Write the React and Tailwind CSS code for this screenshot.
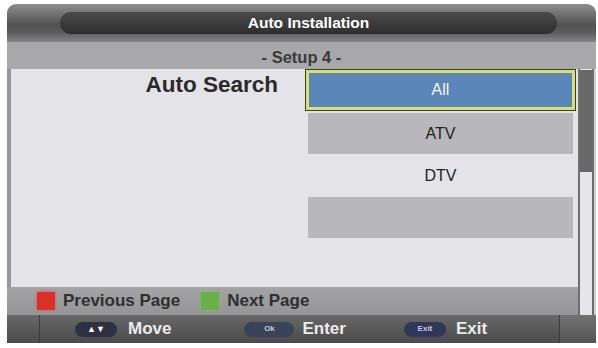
import React from "react"

const font = { fontFamily: '"Liberation Sans", Arial, sans-serif' }

function Pill({ children, color, width }) {
  return (
    <div
      className={`h-[15px] rounded-full flex items-center justify-center text-[8px] font-bold text-[#c9ccd6] leading-none ${color} ${width}`}
    >
      {children}
    </div>
  )
}

function ListItem({ label, tone }) {
  if (tone === "gray") {
    return (
      <div className="mx-[3px] h-[41px] bg-[#b8b7bb] flex items-center justify-center text-[16px] text-[#222]">
        {label}
      </div>
    )
  }
  return (
    <div className="mx-[3px] h-[43px] flex items-center justify-center text-[16px] text-[#222]">
      {label}
    </div>
  )
}

export default function App() {
  return (
    <div className="w-[598px] h-[348px] bg-white pt-[4px] pl-[7px] overflow-hidden" style={font}>
      <div className="w-[589px] flex flex-col">
        {/* title bar */}
        <div className="h-[38px] rounded-t-[9px] bg-[linear-gradient(to_bottom,#8e8e8e,#525252_55%,#5c5c5c_75%,#848486)] pt-[8px] pl-[53px] pr-[39px]">
          <div className="h-[22px] rounded-full bg-[linear-gradient(to_bottom,#4a4a4a,#2e2e2e)] flex items-center justify-center text-white text-[15.5px] font-bold">
            Auto Installation
          </div>
        </div>

        {/* setup step */}
        <div className="h-[27px] bg-[#a8a8aa] flex items-center justify-center pt-[3px] text-[16.5px] font-bold text-[#3a3a3a]">
          - Setup 4 -
        </div>

        {/* middle */}
        <div className="flex h-[246px]">
          <div className="w-[571px] flex flex-col">
            <div className="h-[218px] flex bg-[#e4e3e8] border-l-[4px] border-[#97979a]">
              <div className="w-[294px] pt-[3px] pr-[27px] text-right text-[22.5px] leading-[26px] font-bold text-[#2a2a2a]">
                Auto Search
              </div>
              <div className="w-[271px] flex flex-col">
                <div className="h-[42px] border border-[#3e3e30] bg-[#d6e16e] p-[3px]">
                  <div className="h-full bg-[#5b86b9] flex items-center justify-center text-[16px] text-[#f4f6fa]">
                    All
                  </div>
                </div>
                <div className="h-[2px]" />
                <ListItem label="ATV" tone="gray" />
                <ListItem label="DTV" />
                <ListItem label="" tone="gray" />
              </div>
            </div>
            <div className="h-[28px] bg-[linear-gradient(to_bottom,#a4a4a6,#959597)] flex items-center pl-[30px] text-[17px] font-bold text-[#2f2f2f]">
              <span className="w-[18px] h-[18px] bg-[#d9302a] shadow-[0_0_3px_#e65050]" />
              <span className="ml-[8px]">Previous Page</span>
              <span className="ml-[21px] w-[18px] h-[18px] bg-[#6ab04a] shadow-[0_0_3px_#80c060]" />
              <span className="ml-[8px]">Next Page</span>
            </div>
          </div>
          <div className="flex-1 flex bg-[#e4e3e8]">
            <div className="w-[16px] border-x-2 border-[#6e6e6e] bg-[#e6e6ea] pt-[1px]">
              <div className="h-[102px] bg-[#686868]" />
            </div>
            <div className="flex-1 bg-[#d2d2d6]" />
          </div>
        </div>

        {/* key hints */}
        <div className="h-[28px] flex bg-[linear-gradient(to_bottom,#686868,#4a4a4a)] text-[17px] font-bold text-[#ececec]">
          <div className="w-[33px] border-r border-[#3a3a3a]" />
          <div className="w-[520px] flex items-center border-r border-[#3a3a3a]">
            <div className="ml-[35px]">
              <Pill color="bg-[#2d3142]" width="w-[42px]">
                <span className="text-[9px] text-white">▲▼</span>
              </Pill>
            </div>
            <span className="ml-[11px]">Move</span>
            <div className="ml-[73px]">
              <Pill color="bg-[#3b4358]" width="w-[50px]">Ok</Pill>
            </div>
            <span className="ml-[8px]">Enter</span>
            <div className="ml-[58px]">
              <Pill color="bg-[#32365a]" width="w-[42px]">Exit</Pill>
            </div>
            <span className="ml-[10px]">Exit</span>
          </div>
          <div className="flex-1 bg-[linear-gradient(to_bottom,#727272,#555555)]" />
        </div>
      </div>
    </div>
  )
}
